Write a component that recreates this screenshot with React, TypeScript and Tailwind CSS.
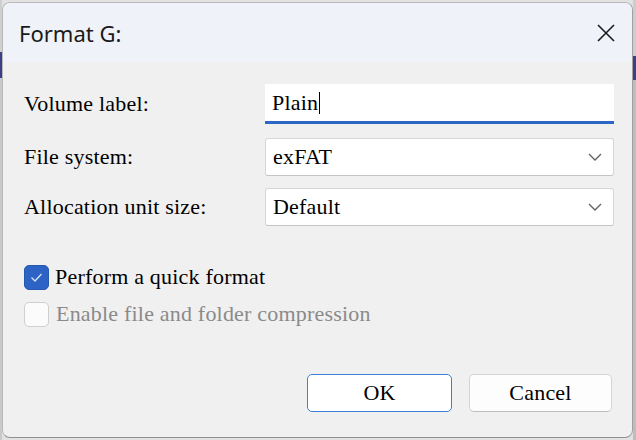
import React from "react";

const serif = {
  fontFamily: "'Liberation Serif', 'DejaVu Serif', serif",
  letterSpacing: "0.2px",
};

function Chevron() {
  return (
    <svg width="16" height="10" viewBox="0 0 16 10" className="shrink-0">
      <path d="M2 2 L8 8 L14 2" fill="none" stroke="#5f5f5f" strokeWidth="1.3" />
    </svg>
  );
}

function Label({ children, gray }: { children: React.ReactNode; gray?: boolean }) {
  return (
    <span
      className={`font-['Liberation_Serif',serif] text-[22px] leading-none ${gray ? "text-[#8a8a8a]" : "text-black"}`}
      style={serif}
    >
      {children}
    </span>
  );
}

function Select({ value }: { value: string }) {
  return (
    <div className="flex h-[38px] w-[349px] items-center justify-between rounded-[3px] border border-[#d6d6d6] border-b-[#c4c4c4] bg-white pl-[7px] pr-[10px]">
      <Label>{value}</Label>
      <Chevron />
    </div>
  );
}

export default function App() {
  return (
    <div className="flex h-[440px] w-[636px] bg-[#e2e2e2]">
      <div className="flex w-[2px] flex-col">
        <div className="h-[52px] bg-[#cfcfcf]" />
        <div className="h-[26px] bg-[#3b3f86]" />
        <div className="flex-1 bg-[#c9c9c9]" />
      </div>
      <div className="mt-[2px] flex h-[436px] w-[631px] flex-col overflow-hidden rounded-[8px] border border-[#b9b9b9] border-b-[#8f8f8f] border-r-[#a0a0a0] bg-[#f0f0f0]">
        <div className="flex h-[59px] shrink-0 items-center justify-between bg-[#eff2f8] pl-[16px] pr-[16px]">
          <span
            className="text-[22px] leading-none text-[#1a1a1a]"
            style={{ fontFamily: '"Noto Sans", "Open Sans", sans-serif' }}
          >
            Format G:
          </span>
          <svg width="20" height="20" viewBox="0 0 20 20">
            <path d="M2 2 L18 18 M18 2 L2 18" stroke="#1a1a1a" strokeWidth="1.6" />
          </svg>
        </div>
        <div className="flex flex-1 flex-col pl-[21px] pr-[18px] pt-[22px]">
          <div className="flex h-[40px] items-center justify-between">
            <Label>Volume label:</Label>
            <div className="flex h-[40px] w-[349px] items-center border-b-[3px] border-b-[#2c67c4] bg-white pl-[7px]">
              <Label>Plain</Label>
              <span className="ml-[1px] h-[22px] w-[1px] bg-black" />
            </div>
          </div>
          <div className="mt-[14px] flex h-[38px] items-center justify-between">
            <Label>File system:</Label>
            <Select value="exFAT" />
          </div>
          <div className="mt-[12px] flex h-[38px] items-center justify-between">
            <Label>Allocation unit size:</Label>
            <Select value="Default" />
          </div>
          <div className="mt-[39px] flex h-[25px] items-center">
            <div className="flex h-[25px] w-[25px] items-center justify-center rounded-[5px] border border-[#2558b0] bg-[#2c63c4]">
              <svg width="13" height="11" viewBox="0 0 13 11">
                <path d="M1.5 5.5 L5 9 L11.5 2" fill="none" stroke="#dce6f6" strokeWidth="1.3" />
              </svg>
            </div>
            <span className="ml-[6px]">
              <Label>Perform a quick format</Label>
            </span>
          </div>
          <div className="mt-[12px] flex h-[25px] items-center">
            <div className="h-[25px] w-[25px] rounded-[5px] border border-[#cfcfcf] bg-[#fbfbfb]" />
            <span className="ml-[7px]">
              <Label gray>Enable file and folder compression</Label>
            </span>
          </div>
          <div className="mt-[47px] flex justify-end gap-[17px] pr-[2px]">
            <div className="flex h-[38px] w-[145px] items-center justify-center rounded-[5px] border-[1.5px] border-[#3f7fd8] bg-white">
              <Label>OK</Label>
            </div>
            <div className="flex h-[38px] w-[143px] items-center justify-center rounded-[5px] border border-[#d4d4d4] border-b-[#bdbdbd] bg-[#fdfdfd]">
              <Label>Cancel</Label>
            </div>
          </div>
        </div>
      </div>
      <div className="flex flex-1 flex-col">
        <div className="h-[56px] bg-[#cdcdcd]" />
        <div className="h-[24px] bg-[#3b3f86]" />
        <div className="flex-1 bg-[#bdbdbd]" />
      </div>
    </div>
  );
}
